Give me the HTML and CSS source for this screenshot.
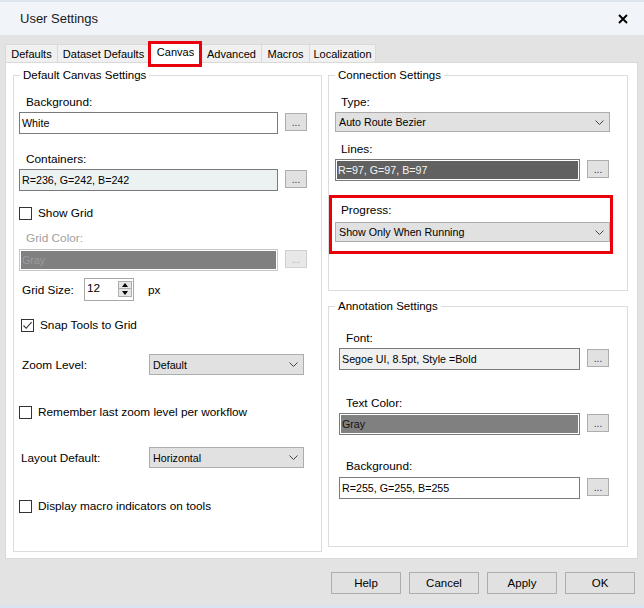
FILE: index.html
```html
<!DOCTYPE html>
<html>
<head>
<meta charset="utf-8">
<link rel="stylesheet" href="styles.css">
</head>
<body>
<div class="window">
  <div class="titlebar">
    <span class="title">User Settings</span>
    <svg class="close" width="10" height="10" viewBox="0 0 10 10"><path d="M1 1L9 9M9 1L1 9" stroke="#000" stroke-width="1.9" fill="none"/></svg>
  </div>
  <div class="tabs">
    <div class="tab w-defaults">Defaults</div>
    <div class="tab w-dataset">Dataset Defaults</div>
    <div class="tab w-canvas selected">Canvas</div>
    <div class="tab w-advanced">Advanced</div>
    <div class="tab w-macros">Macros</div>
    <div class="tab w-local last">Localization</div>
  </div>
  <div class="panel">
    <fieldset class="group left">
      <legend>Default Canvas Settings</legend>
      <div class="lbl l-bg">Background:</div>
      <div class="field f-bg">
        <div class="input in-left">White</div>
        <div class="dots">...</div>
      </div>
      <div class="lbl l-cont">Containers:</div>
      <div class="field f-cont">
        <div class="input in-left containers">R=236, G=242, B=242</div>
        <div class="dots">...</div>
      </div>
      <div class="check c-grid"><span class="box"></span><span>Show Grid</span></div>
      <div class="lbl l-gc disabled-text">Grid Color:</div>
      <div class="field f-gc">
        <div class="input in-left gray-disabled">Gray</div>
        <div class="dots dots-disabled">...</div>
      </div>
      <div class="row r-size">
        <span class="size-lbl">Grid Size:</span>
        <div class="spin">
          <span class="spin-val">12</span>
          <div class="spin-btns">
            <span class="spin-btn"><svg width="6" height="4" viewBox="0 0 6 4"><path d="M0 4L3 0L6 4Z" fill="#000"/></svg></span>
            <span class="spin-btn"><svg width="6" height="4" viewBox="0 0 6 4"><path d="M0 0L6 0L3 4Z" fill="#000"/></svg></span>
          </div>
        </div>
        <span class="px">px</span>
      </div>
      <div class="check c-snap"><span class="box"><svg width="11" height="11" viewBox="0 0 11 11"><path d="M1.5 5.5L4.2 8.3L9.6 2.2" stroke="#333" stroke-width="1.1" fill="none"/></svg></span><span>Snap Tools to Grid</span></div>
      <div class="row r-zoom">
        <span class="row-lbl">Zoom Level:</span>
        <div class="select sel-left"><span>Default</span><svg width="9" height="5" viewBox="0 0 9 5"><path d="M0.5 0.5L4.5 4.5L8.5 0.5" stroke="#444" stroke-width="1" fill="none"/></svg></div>
      </div>
      <div class="check c-remember"><span class="box"></span><span>Remember last zoom level per workflow</span></div>
      <div class="row r-layout">
        <span class="row-lbl lay">Layout Default:</span>
        <div class="select sel-left"><span>Horizontal</span><svg width="9" height="5" viewBox="0 0 9 5"><path d="M0.5 0.5L4.5 4.5L8.5 0.5" stroke="#444" stroke-width="1" fill="none"/></svg></div>
      </div>
      <div class="check c-display"><span class="box"></span><span>Display macro indicators on tools</span></div>
    </fieldset>
    <div class="rightcol">
      <fieldset class="group conn">
        <legend>Connection Settings</legend>
        <div class="lbl r-lbl l-type">Type:</div>
        <div class="select sel-right s-type"><span>Auto Route Bezier</span><svg width="9" height="5" viewBox="0 0 9 5"><path d="M0.5 0.5L4.5 4.5L8.5 0.5" stroke="#444" stroke-width="1" fill="none"/></svg></div>
        <div class="lbl r-lbl l-lines">Lines:</div>
        <div class="field f-lines">
          <div class="input in-conn dark-fill">R=97, G=97, B=97</div>
          <div class="dots">...</div>
        </div>
        <div class="progress">
          <div class="lbl r-lbl l-prog">Progress:</div>
          <div class="select sel-right s-prog"><span>Show Only When Running</span><svg width="9" height="5" viewBox="0 0 9 5"><path d="M0.5 0.5L4.5 4.5L8.5 0.5" stroke="#444" stroke-width="1" fill="none"/></svg></div>
        </div>
      </fieldset>
      <fieldset class="group annot">
        <legend>Annotation Settings</legend>
        <div class="lbl a-lbl l-font">Font:</div>
        <div class="field f-font">
          <div class="input in-annot font-fill">Segoe UI, 8.5pt, Style =Bold</div>
          <div class="dots">...</div>
        </div>
        <div class="lbl a-lbl l-tc">Text Color:</div>
        <div class="field f-tc">
          <div class="input in-annot gray-fill">Gray</div>
          <div class="dots">...</div>
        </div>
        <div class="lbl a-lbl l-abg">Background:</div>
        <div class="field f-abg">
          <div class="input in-annot">R=255, G=255, B=255</div>
          <div class="dots">...</div>
        </div>
      </fieldset>
    </div>
  </div>
  <div class="buttons">
    <div class="btn">Help</div>
    <div class="btn">Cancel</div>
    <div class="btn">Apply</div>
    <div class="btn">OK</div>
  </div>
</div>
</body>
</html>
```
FILE: styles.css
```css
html, body {
  margin: 0;
  padding: 0;
}
body {
  width: 644px;
  height: 608px;
  overflow: hidden;
  font-family: "Liberation Sans", Arial, sans-serif;
  font-size: 11.8px;
  color: #000;
  background: #e3e3e3;
}
.window {
  width: 644px;
  height: 608px;
  box-sizing: border-box;
  background: #e3e3e3;
  border-bottom: 3px solid #dae4f1;
}
.titlebar {
  height: 35px;
  box-sizing: border-box;
  border-top: 2px solid #dee4eb;
  background: #f1f4f9;
  display: flex;
  align-items: center;
  justify-content: space-between;
  padding: 0 16px 0 20px;
  font-size: 13px;
  color: #1a1a1a;
}
.tabs {
  height: 27px;
  box-sizing: border-box;
  padding: 9px 0 0 5px;
  display: flex;
  align-items: flex-start;
}
.tab {
  height: 18px;
  box-sizing: border-box;
  border: 1px solid #d9d9d9;
  border-right: none;
  border-bottom: none;
  background: #f0f0f0;
  font-size: 11px;
  display: flex;
  align-items: center;
  justify-content: center;
  white-space: nowrap;
  color: #000;
}
.tab.last { border-right: 1px solid #d9d9d9; }
.w-defaults { width: 52px; }
.w-dataset { width: 92px; }
.w-canvas { width: 52px; }
.w-advanced { width: 60px; }
.w-macros { width: 48px; }
.w-local { width: 67px; }
.tab.selected {
  background: #fff;
  height: 21px;
  margin-top: -2px;
  position: relative;
  z-index: 2;
  padding-bottom: 2px;
}
.tab.selected::after {
  content: "";
  position: absolute;
  left: -2px;
  top: -2px;
  width: 54px;
  height: 26px;
  box-sizing: border-box;
  border: 3px solid #e8000b;
}
.panel {
  margin: 0 6px 0 5px;
  height: 497px;
  box-sizing: border-box;
  border: 1px solid #d9d9d9;
  background: #fff;
  display: flex;
  align-items: flex-start;
  gap: 6px;
  padding: 5px 9px 0 7px;
}
fieldset.group {
  margin: 0;
  padding: 0;
  border: 1px solid #dcdcdc;
  box-sizing: border-box;
  min-width: 0;
}
legend {
  margin-left: 6px;
  padding: 0 3px;
  font-size: 11.5px;
  line-height: 14px;
  color: #000;
}
.left { width: 309px; height: 484px; }
.rightcol {
  width: 300px;
  display: flex;
  flex-direction: column;
  gap: 8px;
}
.conn { height: 223px; }
.annot { height: 248px; }

.lbl {
  height: 14px;
  line-height: 14px;
  white-space: nowrap;
}
.disabled-text { color: #a0a0a0; }
.field {
  display: flex;
  align-items: flex-start;
  gap: 7px;
}
.input {
  box-sizing: border-box;
  height: 22px;
  border: 1px solid #7a7a7a;
  background: #fff;
  padding: 0 2px;
  display: flex;
  align-items: center;
  white-space: nowrap;
  overflow: hidden;
  font-size: 10.7px;
}
.dots {
  width: 22px;
  height: 18px;
  box-sizing: border-box;
  margin-top: 1px;
  border: 1px solid #adadad;
  background: #e1e1e1;
  display: flex;
  align-items: flex-end;
  justify-content: center;
  font-size: 10px;
  line-height: 10px;
  padding-bottom: 2px;
  color: #2a2a6a;
}
.dots-disabled {
  border-color: #d0d0d0;
  background: #e8e8e8;
  color: #b0b0b0;
}
.containers { background: #ecf2f2; }
.gray-disabled {
  background: #808080;
  border-color: #c8c8c8;
  box-shadow: inset 0 0 0 1px #fff;
  color: #9c9c9c;
}
.gray-fill {
  background: #808080;
  box-shadow: inset 0 0 0 1px #fff;
  color: #111;
}
.dark-fill {
  background: #616161;
  box-shadow: inset 0 0 0 1px #fff;
  color: #f4f4f4;
}
.font-fill { background: #f0f0f0; }

.check {
  display: flex;
  align-items: center;
  gap: 6px;
  height: 14px;
  white-space: nowrap;
}
.box {
  width: 13px;
  height: 13px;
  box-sizing: border-box;
  border: 1px solid #333;
  background: #fff;
  display: flex;
  align-items: center;
  justify-content: center;
}
.row {
  display: flex;
  align-items: center;
  white-space: nowrap;
}
.select {
  box-sizing: border-box;
  border: 1px solid #adadad;
  background: #e1e1e1;
  display: flex;
  align-items: center;
  justify-content: space-between;
  padding: 0 5px 0 3px;
  white-space: nowrap;
  font-size: 10.7px;
}
.sel-left { width: 155px; height: 21px; }
.sel-right { width: 275px; height: 20px; margin-left: 6px; }

/* left group vertical rhythm */
.l-bg { margin: 13px 0 0 12px; }
.f-bg { margin: 3px 0 0 5px; }
.l-cont { margin: 18px 0 0 12px; }
.f-cont { margin: 3px 0 0 5px; }
.c-grid { margin: 15px 0 0 5px; }
.l-gc { margin: 11px 0 0 12px; }
.f-gc { margin: 4px 0 0 5px; }
.in-left { width: 259px; }
.r-size { margin: 7px 0 0 8px; height: 23px; }
.size-lbl { width: 62px; }
.spin {
  width: 50px;
  height: 23px;
  box-sizing: border-box;
  border: 1px solid #a8a8a8;
  display: flex;
  justify-content: space-between;
  padding: 2px 1px 0 2px;
}
.spin-val { line-height: 14px; }
.spin-btns {
  display: flex;
  flex-direction: column;
  width: 14px;
}
.spin-btn {
  width: 14px;
  height: 8px;
  box-sizing: border-box;
  border: 1px solid #adadad;
  background: #e6e6e6;
  display: flex;
  align-items: center;
  justify-content: center;
}
.spin-btn + .spin-btn { border-top: none; height: 8px; }
.px { margin-left: 14px; }
.c-snap { margin: 17px 0 0 7px; }
.r-zoom { margin: 22px 0 0 8px; }
.row-lbl { width: 127px; }
.row-lbl.lay { width: 128px; }
.c-remember { margin: 30px 0 0 5px; }
.r-layout { margin: 28px 0 0 7px; }
.c-display { margin: 31px 0 0 5px; }

/* connection group */
.r-lbl { margin-left: 12px; }
.l-type { margin-top: 13px; }
.s-type { margin-top: 3px; }
.l-lines { margin-top: 10px; }
.f-lines { margin: 3px 0 0 6px; }
.in-conn { width: 245px; }
.progress {
  position: relative;
  margin-top: 22px;
}
.progress::after {
  content: "";
  position: absolute;
  left: 0;
  top: -8px;
  width: 284px;
  height: 59px;
  box-sizing: border-box;
  border: 3px solid #e8000b;
}
.s-prog { margin-top: 5px; }

/* annotation group */
.a-lbl { margin-left: 17px; }
.in-annot { width: 241px; }
.l-font { margin-top: 18px; }
.f-font { margin: 3px 0 0 10px; }
.l-tc { margin-top: 26px; }
.f-tc { margin: 3px 0 0 10px; }
.l-abg { margin-top: 24px; }
.f-abg { margin: 4px 0 0 10px; }

.buttons {
  display: flex;
  justify-content: flex-end;
  gap: 8px;
  padding: 13px 9px 0 0;
}
.btn {
  width: 70px;
  height: 22px;
  box-sizing: border-box;
  border: 1px solid #adadad;
  background: #e1e1e1;
  font-size: 11.5px;
  display: flex;
  align-items: center;
  justify-content: center;
  color: #000;
}
```
